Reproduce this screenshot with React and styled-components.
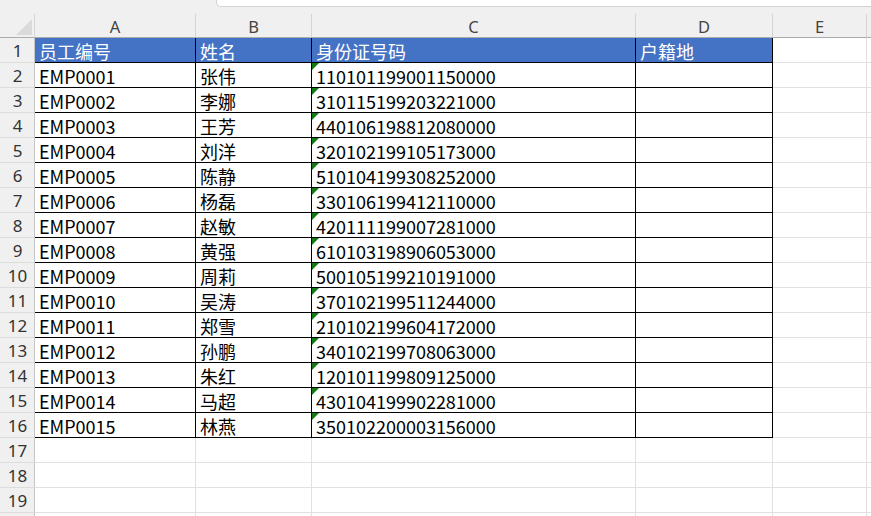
import React from "react";
import styled, { createGlobalStyle } from "styled-components";

const GlobalStyle = createGlobalStyle`
  html, body {
    margin: 0;
    padding: 0;
    background: #ffffff;
    overflow: hidden;
  }
  #root {
    width: 871px;
    height: 516px;
    overflow: hidden;
  }
`;

const Window = styled.div`
  width: 871px;
  height: 516px;
  overflow: hidden;
  background: #ffffff;
  display: flex;
  flex-direction: column;
`;

const FormulaStrip = styled.div`
  height: 14px;
  flex: 0 0 14px;
  background: #f0f0f0;
  display: flex;
  align-items: flex-start;
  padding-left: 216px;
  box-sizing: border-box;
`;

const FormulaBox = styled.div`
  flex: 1;
  height: 7px;
  background: #ffffff;
  border: 1px solid #d2d2d2;
  border-top: none;
  border-right: none;
  border-bottom-left-radius: 5px;
  box-sizing: border-box;
`;

const Grid = styled.div`
  display: grid;
  grid-template-columns: 35px 161px 116px 324px 137px 94px 1fr;
  grid-auto-rows: 25px;
  grid-template-rows: 24px;
`;

const Corner = styled.div`
  position: relative;
  background: #f0f0f0;
  border-right: 1px solid #d4d4d4;
  border-bottom: 1px solid #ababab;
  box-sizing: border-box;
  &::after {
    content: "";
    position: absolute;
    right: 2px;
    bottom: 2px;
    width: 0;
    height: 0;
    border-left: 16px solid transparent;
    border-bottom: 16px solid #dadada;
  }
`;

const ColHead = styled.div`
  background: #f0f0f0;
  border-right: 1px solid ${(p) => (p.$last ? "transparent" : "#d4d4d4")};
  border-bottom: 1px solid #ababab;
  box-sizing: border-box;
  display: flex;
  align-items: center;
  justify-content: center;
  font-family: "Noto Sans", "Open Sans", sans-serif;
  font-size: 16.5px;
  color: #444444;
  padding-top: 2px;
`;

const RowHead = styled.div`
  background: #f0f0f0;
  border-right: 1px solid #c6c6c6;
  border-bottom: 1px solid #dcdcdc;
  box-sizing: border-box;
  display: flex;
  align-items: center;
  justify-content: center;
  font-family: "Noto Sans", "Open Sans", sans-serif;
  font-size: 17px;
  color: #333333;
  padding-left: 1px;
  padding-top: 1px;
`;

const Cell = styled.div`
  position: relative;
  box-sizing: border-box;
  border-right: 1px solid ${(p) => (p.$ruled ? "#000000" : "#e1e1e1")};
  border-bottom: 1px solid ${(p) => (p.$ruled ? "#000000" : "#e1e1e1")};
  background: ${(p) => (p.$head ? "#4472c4" : "#ffffff")};
  color: ${(p) => (p.$head ? "#ffffff" : "#000000")};
  font-family: "Noto Sans CJK SC", "Noto Sans", sans-serif;
  font-size: 18px;
  line-height: 24px;
  padding: 1px 0 0 4px;
  white-space: nowrap;
  overflow: hidden;

  ${(p) =>
    p.$flag &&
    `
    &::before {
      content: "";
      position: absolute;
      left: 0;
      top: 0;
      width: 0;
      height: 0;
      border-top: 7px solid #127a12;
      border-right: 7px solid transparent;
    }
  `}
`;

const columns = ["A", "B", "C", "D", "E", ""];

const headers = ["员工编号", "姓名", "身份证号码", "户籍地"];

const staff = [
  ["EMP0001", "张伟", "110101199001150000"],
  ["EMP0002", "李娜", "310115199203221000"],
  ["EMP0003", "王芳", "440106198812080000"],
  ["EMP0004", "刘洋", "320102199105173000"],
  ["EMP0005", "陈静", "510104199308252000"],
  ["EMP0006", "杨磊", "330106199412110000"],
  ["EMP0007", "赵敏", "420111199007281000"],
  ["EMP0008", "黄强", "610103198906053000"],
  ["EMP0009", "周莉", "500105199210191000"],
  ["EMP0010", "吴涛", "370102199511244000"],
  ["EMP0011", "郑雪", "210102199604172000"],
  ["EMP0012", "孙鹏", "340102199708063000"],
  ["EMP0013", "朱红", "120101199809125000"],
  ["EMP0014", "马超", "430104199902281000"],
  ["EMP0015", "林燕", "350102200003156000"],
];

// rows 1..19 are labelled, row 20 only peeks in at the bottom edge
const LABELLED_ROWS = 19;
const TOTAL_ROWS = 20;

function SheetRow({ index }) {
  const label = index <= LABELLED_ROWS ? index : "";

  if (index === 1) {
    return (
      <>
        <RowHead>{label}</RowHead>
        {headers.map((h) => (
          <Cell key={h} $head $ruled>
            {h}
          </Cell>
        ))}
        <Cell />
        <Cell />
      </>
    );
  }

  const rec = staff[index - 2];
  if (rec) {
    return (
      <>
        <RowHead>{label}</RowHead>
        <Cell $ruled>{rec[0]}</Cell>
        <Cell $ruled>{rec[1]}</Cell>
        <Cell $ruled $flag>
          {rec[2]}
        </Cell>
        <Cell $ruled />
        <Cell />
        <Cell />
      </>
    );
  }

  return (
    <>
      <RowHead>{label}</RowHead>
      <Cell />
      <Cell />
      <Cell />
      <Cell />
      <Cell />
      <Cell />
    </>
  );
}

export default function App() {
  return (
    <Window>
      <GlobalStyle />
      <FormulaStrip>
        <FormulaBox />
      </FormulaStrip>
      <Grid>
        <Corner />
        {columns.map((c, i) => (
          <ColHead key={i} $last={i === columns.length - 1}>
            {c}
          </ColHead>
        ))}
        {Array.from({ length: TOTAL_ROWS }, (_, i) => (
          <SheetRow key={i} index={i + 1} />
        ))}
      </Grid>
    </Window>
  );
}
